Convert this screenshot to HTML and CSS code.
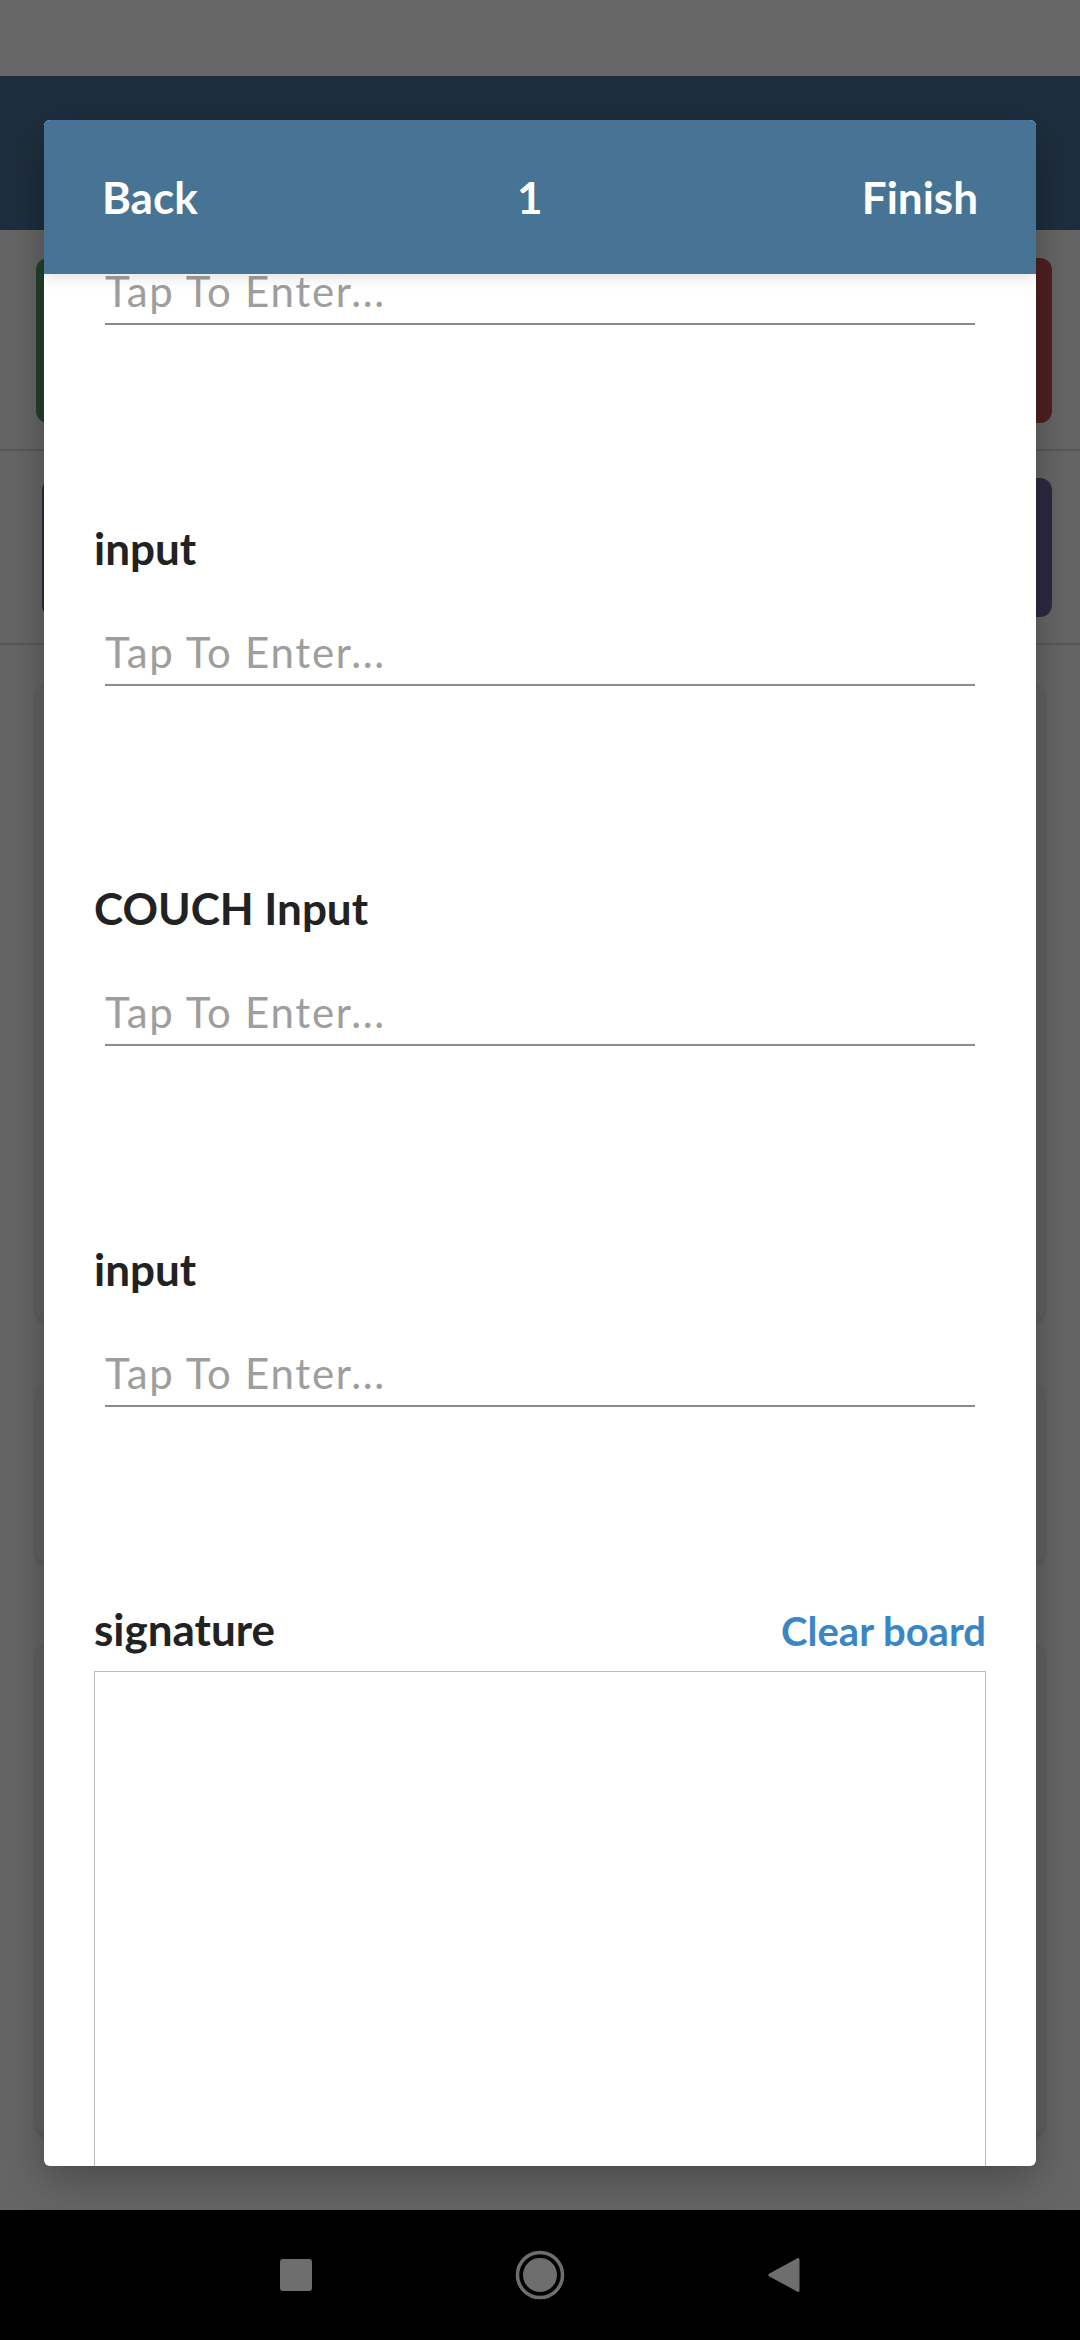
FILE: index.html
```html
<!DOCTYPE html>
<html>
<head>
<meta charset="utf-8">
<link rel="stylesheet" href="styles.css">
</head>
<body>
<div class="screen">
  <div class="statusbar"></div>
  <div class="appbar"></div>
  <div class="bg">
    <div class="card-row">
      <div class="card card-green"></div>
      <div class="card card-red"></div>
    </div>
    <div class="sep sep-a"></div>
    <div class="card card-purple"></div>
    <div class="sep sep-b"></div>
    <div class="card card-plain card-1"></div>
    <div class="card card-plain card-2"></div>
    <div class="card card-plain card-3"></div>
  </div>
  <div class="navbar">
    <div class="nav-slot"><span class="nav-square"></span></div>
    <div class="nav-slot">
      <svg width="50" height="50" viewBox="0 0 50 50"><circle cx="25" cy="25" r="22.5" fill="none" stroke="#6e6e6e" stroke-width="3.5"/><circle cx="25" cy="25" r="17" fill="#6e6e6e"/></svg>
    </div>
    <div class="nav-slot">
      <svg width="36" height="38" viewBox="0 0 36 38"><path d="M31 2.5 C32 1.6 33.5 2.2 33.5 3.6 L33.5 34.4 C33.5 35.8 32 36.4 31 35.5 L3 20.2 C2 19.5 2 18.5 3 17.8 Z" fill="#6e6e6e"/></svg>
    </div>
  </div>

  <div class="modal">
    <div class="modal-head">
      <span class="head-btn">Back</span>
      <span class="head-title">1</span>
      <span class="head-btn">Finish</span>
    </div>
    <div class="modal-body">
      <div class="field field-first">
        <div class="input">Tap To Enter...</div>
      </div>
      <div class="field">
        <div class="label">input</div>
        <div class="input">Tap To Enter...</div>
      </div>
      <div class="field">
        <div class="label">COUCH Input</div>
        <div class="input">Tap To Enter...</div>
      </div>
      <div class="field">
        <div class="label">input</div>
        <div class="input">Tap To Enter...</div>
      </div>
      <div class="sig">
        <div class="sig-row">
          <span class="label">signature</span>
          <span class="clear">Clear board</span>
        </div>
        <div class="sig-box"></div>
      </div>
    </div>
  </div>
</div>
</body>
</html>
```

FILE: styles.css
```css
* { box-sizing: border-box; }
html, body { margin: 0; padding: 0; }
body {
  width: 1080px;
  height: 2340px;
  overflow: hidden;
  font-family: Lato, "Open Sans", "Liberation Sans", sans-serif;
  background: #656565;
}
.screen {
  position: relative;
  width: 1080px;
  height: 2340px;
  display: flex;
  flex-direction: column;
}
.statusbar { height: 76px; background: #676767; }
.appbar { height: 154px; background: #1e2e3e; }
.bg {
  height: 1980px;
  background: #656565;
  padding-top: 28px;
  display: flex;
  flex-direction: column;
}
.card-row {
  display: flex;
  gap: 24px;
  padding: 0 28px 0 36px;
  height: 165px;
}
.card { border-radius: 12px; }
.card-green { flex: 1; background: #253f2a; }
.card-red { flex: 1; background: #4f2020; }
.sep { height: 2px; background: #575757; }
.sep-a { margin-top: 26px; }
.sep-b { margin-top: 26px; }
.card-purple {
  margin: 27px 28px 0 42px;
  height: 139px;
  background: #2c2a40;
}
.card-plain {
  margin-left: 36px;
  margin-right: 36px;
  background: #616161;
  box-shadow: 0 2px 5px rgba(0,0,0,0.18);
}
.card-1 { margin-top: 40px; height: 636px; }
.card-2 { margin-top: 64px; height: 178px; }
.card-3 { margin-top: 81px; height: 491px; }

.navbar {
  height: 130px;
  background: #000;
  display: flex;
  justify-content: center;
  align-items: center;
  gap: 184px;
}
.nav-slot {
  width: 60px;
  height: 60px;
  display: flex;
  align-items: center;
  justify-content: center;
}
.nav-square {
  width: 32px;
  height: 32px;
  border-radius: 3px;
  background: #6e6e6e;
}

.modal {
  position: absolute;
  left: 44px;
  top: 120px;
  width: 992px;
  height: 2046px;
  background: #fff;
  border-radius: 6px;
  overflow: hidden;
  box-shadow: 0 12px 40px rgba(0,0,0,0.28);
  display: flex;
  flex-direction: column;
}
.modal-head {
  position: relative;
  z-index: 2;
  height: 154px;
  flex: none;
  background: #477495;
  padding: 0 58px;
  display: flex;
  justify-content: space-between;
  align-items: center;
  color: #fff;
  font-weight: 700;
  font-size: 44px;
  line-height: 52px;
  box-shadow: 0 5px 12px rgba(0,0,0,0.10);
}
.modal-body {
  flex: 1;
  overflow: hidden;
  padding: 0 50px;
}
.field { height: 360.5px; display: flow-root; }
.field-first { margin-top: -61px; height: 308.5px; }
.label {
  font-size: 44px;
  line-height: 52px;
  font-weight: 700;
  color: #222;
}
.input {
  margin: 54.3px 11px 0;
  font-size: 42px;
  line-height: 48px;
  letter-spacing: 1.7px;
  color: #9e9e9e;
  padding-bottom: 8px;
  border-bottom: 2px solid #8a8a8a;
}
.sig-row {
  display: flex;
  justify-content: space-between;
  align-items: baseline;
  line-height: 52px;
}
.clear {
  font-size: 40px;
  font-weight: 700;
  color: #3a86c5;
}
.sig-box {
  margin-top: 14px;
  height: 497px;
  border: 1px solid #bdbdbd;
}
```
